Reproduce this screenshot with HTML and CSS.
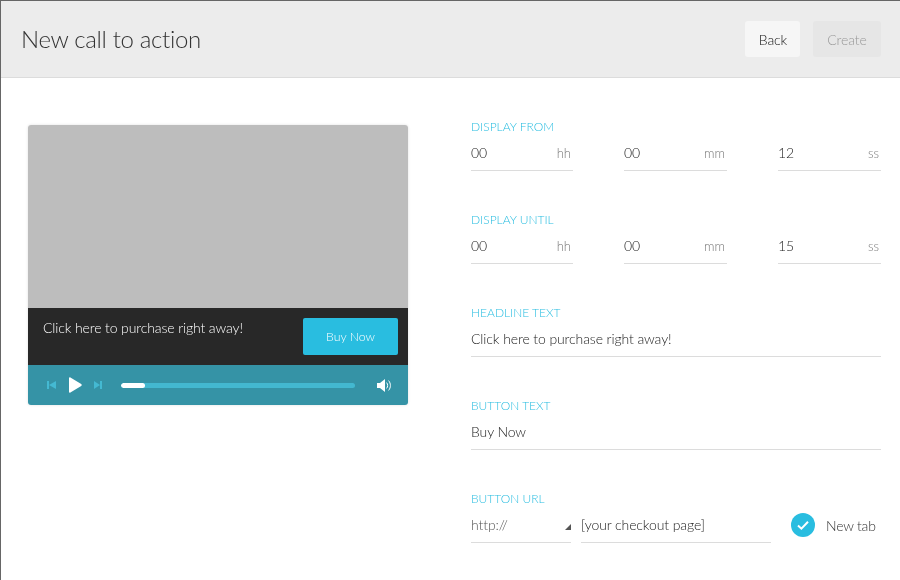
FILE: index.html
```html
<!DOCTYPE html>
<html lang="en">
<head>
<meta charset="utf-8">
<title>New call to action</title>
<link rel="stylesheet" href="styles.css">
</head>
<body>
<div class="frame">
  <header class="topbar">
    <h1 class="title">New call to action</h1>
    <div class="actions">
      <button class="btn btn-back">Back</button>
      <button class="btn btn-create">Create</button>
    </div>
  </header>
  <main class="content">
    <section class="player">
      <div class="screen"></div>
      <div class="cta">
        <span class="cta-text">Click here to purchase right away!</span>
        <span class="cta-btn">Buy Now</span>
      </div>
      <div class="controls">
        <svg class="skip" width="9" height="8" viewBox="0 0 9 8"><path d="M0 0h2v8H0zM9 0v8L2 4z"/></svg>
        <svg class="play" width="14" height="16" viewBox="0 0 14 16"><path d="M1 1.2c0-.9.7-1.2 1.4-.8l10.8 6.7c.7.4.7 1.4 0 1.8L2.4 15.6c-.7.4-1.4.1-1.4-.8z"/></svg>
        <svg class="skip" width="9" height="8" viewBox="0 0 9 8"><path d="M0 0l6 4-6 4zM6 0h2v8H6z"/></svg>
        <div class="track"><div class="track-fill"></div></div>
        <svg class="volume" width="15" height="13" viewBox="0 0 15 13"><path class="vol-body" d="M0 4h3l5-4v13L3 9H0z"/><path class="vol-wave" d="M9.6 3.6c1.4 1.6 1.4 4.2 0 5.8M11.6 1.6c2.4 2.8 2.4 7 0 9.8"/></svg>
      </div>
    </section>
    <form class="form">
      <div class="group">
        <div class="label">DISPLAY FROM</div>
        <div class="time-row">
          <div class="field"><span class="val">00</span><span class="unit">hh</span></div>
          <div class="field"><span class="val">00</span><span class="unit">mm</span></div>
          <div class="field"><span class="val">12</span><span class="unit">ss</span></div>
        </div>
      </div>
      <div class="group">
        <div class="label">DISPLAY UNTIL</div>
        <div class="time-row">
          <div class="field"><span class="val">00</span><span class="unit">hh</span></div>
          <div class="field"><span class="val">00</span><span class="unit">mm</span></div>
          <div class="field"><span class="val">15</span><span class="unit">ss</span></div>
        </div>
      </div>
      <div class="group">
        <div class="label">HEADLINE TEXT</div>
        <div class="field"><span class="val">Click here to purchase right away!</span></div>
      </div>
      <div class="group">
        <div class="label">BUTTON TEXT</div>
        <div class="field"><span class="val">Buy Now</span></div>
      </div>
      <div class="group">
        <div class="label">BUTTON URL</div>
        <div class="url-row">
          <div class="field field-select"><span class="val val-muted">http://</span><span class="caret"></span></div>
          <div class="field field-url"><span class="val">[your checkout page]</span></div>
          <div class="newtab">
            <svg class="check" width="24" height="24" viewBox="0 0 24 24"><circle cx="12" cy="12" r="12"/><path d="M7 12.5l3.4 3.2L17 8.8"/></svg>
            <span class="newtab-label">New tab</span>
          </div>
        </div>
      </div>
    </form>
  </main>
</div>
</body>
</html>
```
FILE: styles.css
```css
* { box-sizing: border-box; }
html, body { margin: 0; padding: 0; background: #fff; }
body { width: 900px; height: 580px; overflow: hidden; font-family: Lato, "Liberation Sans", sans-serif; }
.frame { height: 580px; border-top: 1px solid #666; border-left: 1px solid #666; will-change: transform; }
.topbar {
  height: 77px;
  background: #ececec;
  border-bottom: 1px solid #dcdcdc;
  padding: 20px 19px 0 20px;
  display: flex;
  justify-content: space-between;
  align-items: flex-start;
}
.title { margin: 3px 0 0; font-size: 24px; line-height: 30px; font-weight: 300; color: #333; letter-spacing: -.33px; }
.actions { display: flex; gap: 13px; }
.btn {
  height: 36px;
  border: 0;
  border-radius: 3px;
  padding: 0;
  font-family: inherit;
  font-size: 14px;
  font-weight: 300;
}
.btn-back { width: 55px; background: #f6f6f6; color: #111; letter-spacing: -.1px; padding-left: 1px; }
.btn-create { width: 68px; background: #e6e6e6; color: #999; letter-spacing: -.1px; }
.content { display: flex; padding: 47px 19px 0 27px; align-items: flex-start; }
.player {
  width: 380px;
  border-radius: 3px;
  overflow: hidden;
  box-shadow: 0 0 3px rgba(0, 0, 0, .12);
}
.screen { height: 183px; background: #bdbdbd; }
.cta {
  height: 57px;
  background: #282828;
  display: flex;
  justify-content: space-between;
  padding: 10px 10px 0 15px;
}
.cta-text { font-size: 14px; line-height: 20px; font-weight: 300; color: #fff; letter-spacing: -.12px; }
.cta-btn {
  width: 95px;
  height: 37px;
  background: #29bde0;
  border-radius: 2px;
  color: #fff;
  font-size: 12.3px;
  font-weight: 300;
  text-align: center;
  line-height: 37px;
}
.controls {
  height: 40px;
  background: #3593a6;
  display: flex;
  align-items: center;
  padding: 0 16px 0 19px;
}
.skip { fill: #44b9d2; flex: none; }
.play { fill: #fff; flex: none; margin: 0 12px 0 12px; }
.track { flex: 1; height: 5px; margin: 0 22px 0 18px; border-radius: 3px; background: #43b8d0; overflow: hidden; }
.track-fill { width: 24px; height: 5px; border-radius: 3px; background: #fff; }
.volume { flex: none; }
.vol-body { fill: #fff; }
.vol-wave { fill: none; stroke: #fff; stroke-width: 1; }
.form { margin-left: 63px; width: 410px; margin-top: -5px; display: flex; flex-direction: column; gap: 30px; }
.group { height: 63px; }
.label { font-size: 12px; line-height: 14px; font-weight: 300; color: #29bde0; height: 14px; }
.time-row { display: grid; grid-template-columns: 102px 103px 103px; gap: 51px; margin-top: 3px; }
.field {
  height: 34px;
  margin-top: 3px;
  border-bottom: 1px solid #dcdcdc;
  display: flex;
  justify-content: space-between;
  align-items: flex-start;
  padding-top: 6px;
}
.time-row .field { margin-top: 0; padding-top: 6px; }
.val { font-size: 14px; line-height: 20px; font-weight: 300; color: #222; letter-spacing: -.1px; }
.val-muted { color: #555; }
.unit { font-size: 13px; line-height: 20px; font-weight: 300; color: #777; padding: 0 2px 0 0; }
.url-row { display: flex; align-items: flex-start; }
.field-select { width: 100px; padding-right: 0; }
.caret {
  width: 0;
  height: 0;
  margin-top: 9px;
  border-style: solid;
  border-width: 0 0 6px 6px;
  border-color: transparent transparent #555 transparent;
}
.field-url { width: 190px; margin-left: 10px; }
.newtab { display: flex; align-items: center; margin: 7px 0 0 20px; }
.check { flex: none; }
.check circle { fill: #29bde0; }
.check path { fill: none; stroke: #fff; stroke-width: 2; }
.newtab-label { margin-left: 11px; font-size: 14px; font-weight: 300; color: #333; letter-spacing: -.2px; }
```
